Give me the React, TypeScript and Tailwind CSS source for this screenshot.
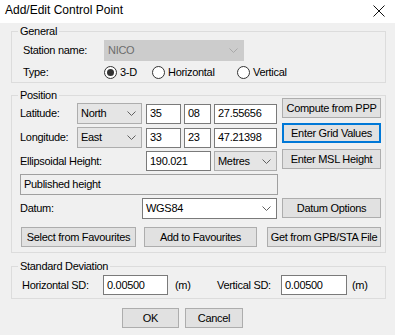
import type { ReactNode } from 'react';

function Chevron({ color = '#606060' }: { color?: string }) {
  return (
    <svg width="9" height="5" viewBox="0 0 9 5" className="shrink-0">
      <polyline points="0.5,0.5 4.5,4.5 8.5,0.5" fill="none" stroke={color} strokeWidth="1" />
    </svg>
  );
}

function Combo({ value, className, variant = 'list' }: { value: string; className: string; variant?: 'list' | 'edit' | 'off' }) {
  const look =
    variant === 'edit'
      ? 'bg-white border-[#7a7a7a] text-black'
      : variant === 'off'
        ? 'bg-[#cccccc] border-[#cccccc] text-[#6d6d6d]'
        : 'bg-[#e5e5e5] border-[#adadad] text-black';
  return (
    <div className={`flex items-center justify-between border pl-[3px] pr-[5px] ${look} ${className}`}>
      <span>{value}</span>
      <Chevron color={variant === 'off' ? '#a8a8a8' : '#606060'} />
    </div>
  );
}

function Field({ value, className }: { value: string; className: string }) {
  return (
    <div className={`flex items-center border border-[#7a7a7a] bg-white pl-[3px] text-black ${className}`}>{value}</div>
  );
}

function Btn({ children, className, focus }: { children: ReactNode; className: string; focus?: boolean }) {
  return (
    <div
      className={`flex items-center justify-center bg-[#e1e1e1] ${
        focus ? 'border-2 border-[#0078d7]' : 'border border-[#adadad]'
      } ${className}`}
    >
      {children}
    </div>
  );
}

function Radio({ label, checked, className }: { label: string; checked?: boolean; className?: string }) {
  return (
    <div className={`flex items-center ${className ?? ''}`}>
      <span className="flex h-[13px] w-[13px] items-center justify-center rounded-full border border-[#333333] bg-white">
        {checked && <span className="h-[7px] w-[7px] rounded-full bg-[#333333]" />}
      </span>
      <span className="ml-[3px]">{label}</span>
    </div>
  );
}

function Group({ title, children, className }: { title: string; children: ReactNode; className?: string }) {
  return (
    <div className={`relative ml-[11px] w-[375px] border border-[#dcdcdc] ${className ?? ''}`}>
      <span className="absolute left-[6px] top-[-7px] bg-[#f0f0f0] px-[2px] leading-[12px]">{title}</span>
      {children}
    </div>
  );
}

export default function App() {
  return (
    <div className="h-[335px] w-[395px] overflow-hidden bg-[#f0f0f0] font-['Liberation_Sans',Arial,sans-serif] text-[11px] tracking-[-0.3px] text-black">
      <div className="flex h-[23px] items-start justify-between bg-white pl-[5px] pr-[10px] pt-[3px]">
        <span className="text-[12px] leading-[14px] tracking-normal">Add/Edit Control Point</span>
        <svg width="12" height="12" viewBox="0 0 12 12" className="mt-[2px]">
          <path d="M0.5 0.5 L11.5 11.5 M11.5 0.5 L0.5 11.5" stroke="#111" strokeWidth="1" />
        </svg>
      </div>

      <Group title="General" className="mt-[8px] pb-[1px] pl-[11px] pt-[8px]">
        <div className="flex h-[21px] items-center">
          <span className="w-[81px]">Station name:</span>
          <Combo value="NICO" variant="off" className="h-[21px] w-[140px]" />
        </div>
        <div className="mt-[2px] flex h-[18px] items-center">
          <span className="w-[81px]">Type:</span>
          <Radio label="3-D" checked className="w-[48px]" />
          <Radio label="Horizontal" className="w-[85px]" />
          <Radio label="Vertical" />
        </div>
      </Group>

      <Group title="Position" className="mt-[12px] pb-[5px] pl-[8px] pr-[3px]">
        <div className="flex">
          <div className="w-[258px] pt-[7px]">
            <div className="flex h-[21px] items-center">
              <span className="w-[57px]">Latitude:</span>
              <Combo value="North" className="h-[21px] w-[65px]" />
              <Field value="35" className="ml-[4px] h-[20px] w-[35px]" />
              <Field value="08" className="ml-[3px] h-[20px] w-[27px]" />
              <Field value="27.55656" className="ml-[3px] h-[20px] w-[63px]" />
            </div>
            <div className="mt-[3px] flex h-[21px] items-center">
              <span className="w-[57px]">Longitude:</span>
              <Combo value="East" className="h-[21px] w-[65px]" />
              <Field value="33" className="ml-[4px] h-[20px] w-[35px]" />
              <Field value="23" className="ml-[3px] h-[20px] w-[27px]" />
              <Field value="47.21398" className="ml-[3px] h-[20px] w-[63px]" />
            </div>
            <div className="mt-[3px] flex h-[20px] items-center">
              <span className="w-[126px]">Ellipsoidal Height:</span>
              <Field value="190.021" className="h-[20px] w-[65px]" />
              <Combo value="Metres" className="ml-[3px] h-[20px] w-[63px]" />
            </div>
            <div className="mt-[3px] flex h-[21px] w-[258px] items-center border border-[#a0a0a0] pl-[3px]">
              Published height
            </div>
          </div>
          <div className="ml-[4px] flex-1 pt-[2px]">
            <Btn className="h-[20px] w-[99px]">Compute from PPP</Btn>
            <Btn focus className="mt-[5px] h-[20px] w-[99px]">Enter Grid Values</Btn>
            <Btn className="mt-[6px] h-[20px] w-[99px]">Enter MSL Height</Btn>
          </div>
        </div>
        <div className="mt-[3px] flex items-start">
          <span className="flex h-[21px] w-[122px] items-center">Datum:</span>
          <Combo value="WGS84" variant="edit" className="h-[21px] w-[135px]" />
          <Btn className="ml-[5px] h-[20px] w-[99px]">Datum Options</Btn>
        </div>
        <div className="mt-[8px] flex">
          <Btn className="ml-[1px] h-[20px] w-[115px]">Select from Favourites</Btn>
          <Btn className="ml-[8px] h-[20px] w-[113px]">Add to Favourites</Btn>
          <Btn className="ml-[10px] h-[20px] w-[114px]">Get from GPB/STA File</Btn>
        </div>
      </Group>

      <Group title="Standard Deviation" className="mt-[13px] pb-[3px] pl-[10px] pt-[8px]">
        <div className="flex h-[20px] items-center">
          <span className="w-[81px]">Horizontal SD:</span>
          <Field value="0.00500" className="h-[20px] w-[65px]" />
          <span className="ml-[7px] w-[42px]">(m)</span>
          <span className="w-[64px]">Vertical SD:</span>
          <Field value="0.00500" className="h-[20px] w-[66px]" />
          <span className="ml-[5px]">(m)</span>
        </div>
      </Group>

      <div className="ml-[122px] mt-[9px] flex">
        <Btn className="h-[20px] w-[57px]">OK</Btn>
        <Btn className="ml-[6px] h-[20px] w-[58px]">Cancel</Btn>
      </div>
    </div>
  );
}
